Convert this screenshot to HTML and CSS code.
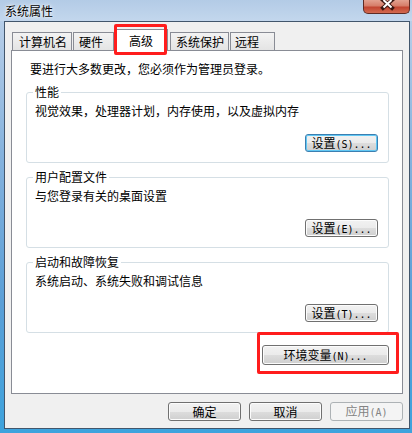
FILE: index.html
```html
<!DOCTYPE html>
<html lang="zh-CN">
<head>
<meta charset="utf-8">
<title>系统属性</title>
<link rel="stylesheet" href="styles.css">
</head>
<body>
<div class="window">
  <div class="titlebar">
    <span class="title">系统属性</span>
    <div class="close">
      <svg width="45" height="13" viewBox="0 0 45 13">
        <path d="M19 0 L28 8 M28 0 L19 8" stroke="#3b1712" stroke-width="4" stroke-linecap="square" fill="none"/>
        <path d="M19.5 0 L27.5 7.5 M27.5 0 L19.5 7.5" stroke="#ffffff" stroke-width="2" fill="none"/>
      </svg>
    </div>
  </div>
  <div class="client">
    <div class="tabs">
      <div class="tab t1">计算机名</div>
      <div class="tab t2">硬件</div>
      <div class="tab sel">高级</div>
      <div class="tab t4">系统保护</div>
      <div class="tab t5">远程</div>
    </div>
    <div class="panel">
      <p class="intro">要进行大多数更改，您必须作为管理员登录。</p>
      <fieldset class="group">
        <legend>性能</legend>
        <p class="desc">视觉效果，处理器计划，内存使用，以及虚拟内存</p>
        <div class="actions"><button class="btn small default">设置<span class="k">(S)...</span></button></div>
      </fieldset>
      <fieldset class="group">
        <legend>用户配置文件</legend>
        <p class="desc">与您登录有关的桌面设置</p>
        <div class="actions"><button class="btn small">设置<span class="k">(E)...</span></button></div>
      </fieldset>
      <fieldset class="group">
        <legend>启动和故障恢复</legend>
        <p class="desc">系统启动、系统失败和调试信息</p>
        <div class="actions"><button class="btn small">设置<span class="k">(T)...</span></button></div>
      </fieldset>
      <div class="env-row"><button class="btn env">环境变量<span class="k">(N)...</span></button></div>
    </div>
    <div class="footer">
      <button class="btn foot">确定</button>
      <button class="btn foot">取消</button>
      <button class="btn foot disabled">应用<span class="k">(A)</span></button>
    </div>
  </div>
  <div class="mark mark-tab"></div>
  <div class="mark mark-env"></div>
</div>
</body>
</html>
```
FILE: styles.css
```css
* { box-sizing: border-box; }
html, body { margin: 0; padding: 0; }
body {
  font-family: "Noto Sans CJK SC", "Noto Sans", sans-serif;
  font-size: 12px;
  color: #000;
  background: #3aa2dc;
}
.window {
  position: relative;
  width: 412px;
  height: 433px;
  display: flex;
  flex-direction: column;
  overflow: hidden;
  background: linear-gradient(to bottom, #bcd2ea 0%, #b2cbe7 8%, #86b3de 35%, #5a9fd7 70%, #3ea3dd 100%);
}
.titlebar {
  height: 21px;
  flex: none;
  display: flex;
  align-items: flex-start;
  background: linear-gradient(to bottom, #b3cbe6, #c3d7ed);
}
.title {
  margin: 2px 0 0 5px;
  line-height: 17px;
  font-size: 12px;
  text-shadow: 0 0 5px #ffffff, 0 0 2px #ffffff;
}
.close {
  margin-left: auto;
  margin-right: 2px;
  width: 47px;
  height: 14px;
  border: 1px solid #5e2b24;
  border-top: none;
  border-radius: 0 0 5px 5px;
  background: linear-gradient(to bottom, #e3a190 0%, #d67d69 45%, #c24531 55%, #d26a50 100%);
  display: flex;
}
.close svg { display: block; }
.client {
  flex: none;
  margin: 0 2px 0 4px;
  height: 408px;
  border: 1px solid #42566c;
  background: #f0f0f0;
  display: flex;
  flex-direction: column;
}
.tabs {
  display: flex;
  align-items: flex-end;
  margin-top: 7px;
  padding-left: 7px;
  height: 21px;
}
.tab {
  height: 18px;
  border: 1px solid #898c95;
  border-bottom: none;
  background: linear-gradient(to bottom, #f3f3f3, #e4e4e4);
  line-height: 17px;
  padding-left: 5px;
  white-space: nowrap;
}
.t1 { width: 60px; padding-left: 6px; }
.t2 { width: 41px; margin-left: 1px; }
.sel {
  width: 54px;
  height: 22px;
  margin-bottom: -1px;
  position: relative;
  z-index: 1;
  background: #ffffff;
  padding: 2px 0 0 0;
  text-align: center;
}
.t4 { width: 59px; margin-left: 2px; }
.t5 { width: 45px; margin-left: 1px; padding-left: 4px; }
.panel {
  margin: 0 6px;
  height: 344px;
  border: 1px solid #898c95;
  background: #ffffff;
  padding-top: 10px;
}
.intro {
  margin: 0 0 0 18px;
  line-height: 16px;
}
.group {
  margin: 8px 13px 0 14px;
  padding: 5px 10px 10px 8px;
  border: 1px solid #d5dfe5;
  border-radius: 3px;
  min-width: 0;
}
.group + .group { margin-top: 7px; }
.group legend {
  margin-left: -2px;
  padding: 0 2px;
  line-height: 14px;
}
.desc {
  margin: 0;
  line-height: 14px;
}
.actions {
  display: flex;
  justify-content: flex-end;
  margin-top: 16px;
}
.btn {
  font: inherit;
  font-size: 12px;
  color: #000;
  padding: 0;
  border: 1px solid #707070;
  border-radius: 3px;
  background: linear-gradient(to bottom, #f2f2f2 0%, #ebebeb 50%, #dddddd 51%, #cfcfcf 100%);
  box-shadow: inset 0 0 0 1px #fcfcfc;
  text-align: center;
  white-space: nowrap;
  line-height: 15px;
}
.btn .k {
  font-family: "DejaVu Sans Mono", "Liberation Mono", monospace;
  font-size: 10px;
}
.small { width: 73px; height: 18px; }
.default {
  border-color: #3c7fb1;
  box-shadow: inset 0 0 0 1px #61c8f4;
}
.env-row {
  display: flex;
  justify-content: flex-end;
  margin: 12px 13px 0 0;
}
.env { width: 127px; height: 20px; line-height: 17px; }
.footer {
  display: flex;
  justify-content: flex-end;
  gap: 8px;
  margin-top: 8px;
  padding-right: 6px;
}
.foot { width: 73px; height: 19px; line-height: 16px; }
.foot.disabled {
  color: #838383;
  border-color: #adb2b5;
  background: #f4f4f4;
  box-shadow: none;
}
.mark {
  position: absolute;
  border: 3px solid #ff1d1d;
  border-radius: 2px;
  z-index: 5;
}
.mark-tab { left: 114px; top: 24px; width: 53px; height: 31px; }
.mark-env { left: 257px; top: 332px; width: 142px; height: 42px; }
```
